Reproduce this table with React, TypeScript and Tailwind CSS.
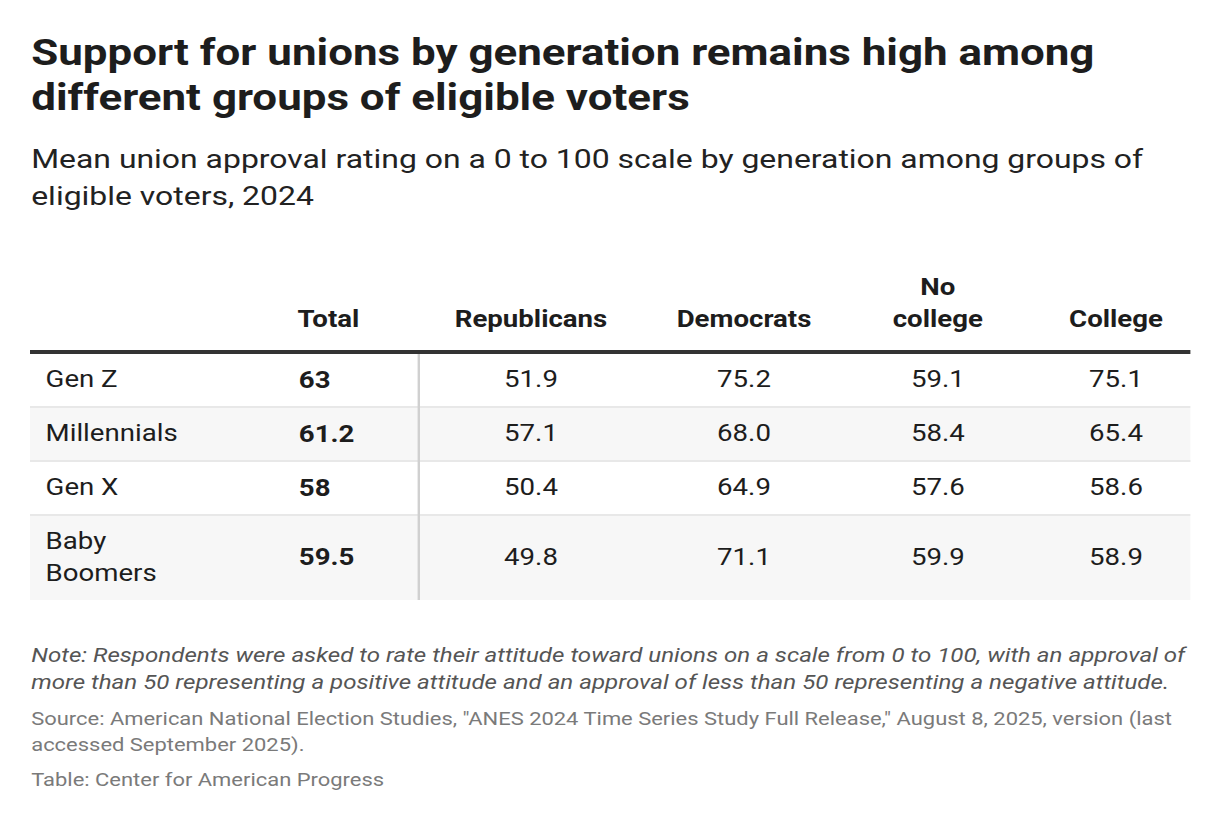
const rows = [
  { label: ['Gen Z'], total: '63', values: ['51.9', '75.2', '59.1', '75.1'] },
  { label: ['Millennials'], total: '61.2', values: ['57.1', '68.0', '58.4', '65.4'] },
  { label: ['Gen X'], total: '58', values: ['50.4', '64.9', '57.6', '58.6'] },
  { label: ['Baby', 'Boomers'], total: '59.5', values: ['49.8', '71.1', '59.9', '58.9'] },
]

const cols = 'grid grid-cols-[213px_112px_185px_170px_153px_134px]'

export default function App() {
  return (
    <div className="w-[1220px] h-[826px] overflow-hidden bg-white">
      <div
        className="w-[1016.67px] origin-top-left scale-x-[1.2] pl-[26px] pr-[16px] pt-[29.5px] text-[#1d1d1d]"
        style={{ fontFamily: 'Roboto, sans-serif' }}
      >
        <h1 className="text-[36.6px] font-bold leading-[45px]">
          Support for unions by generation remains high among different groups of eligible voters
        </h1>
        <p className="mt-[20px] text-[26.6px] leading-[37px] text-[#222]">
          Mean union approval rating on a 0 to 100 scale by generation among groups of eligible voters, 2024
        </p>

        <div className="mt-[58px] -ml-px w-[967px] text-[23px] leading-[32px]">
          <div className={`${cols} items-end border-b-4 border-[#333] font-bold`}>
            <div></div>
            <div className="pl-[10px] pb-[14px]">Total</div>
            <div className="pb-[14px] text-center">Republicans</div>
            <div className="pb-[14px] text-center">Democrats</div>
            <div className="pb-[14px] text-center">
              No
              <br />
              college
            </div>
            <div className="pl-[10px] pb-[14px] text-center">College</div>
          </div>

          {rows.map((r, i) => {
            const last = i === rows.length - 1
            return (
              <div
                key={i}
                className={`${cols} ${i % 2 ? 'bg-[#f7f7f7]' : 'bg-white'} ${last ? '' : 'border-b-2 border-[#e8e8e8]'}`}
              >
                <div className="pl-[13px] py-[10px]">
                  {r.label.map((l, k) => (
                    <div key={k}>{l}</div>
                  ))}
                </div>
                <div
                  className={`flex items-center pl-[11px] font-bold border-r-2 border-[#d0d0d0] ${last ? '' : '-mb-[2px]'}`}
                >
                  {r.total}
                </div>
                {r.values.map((v, j) => (
                  <div key={j} className={`flex items-center justify-center ${j === 3 ? 'pl-[10px]' : ''}`}>
                    {v}
                  </div>
                ))}
              </div>
            )
          })}
        </div>

        <p className="mt-[42px] text-[20.1px] leading-[27px] italic text-[#555]">
          Note: Respondents were asked to rate their attitude toward unions on a scale from 0 to 100, with an approval of more than 50 representing a positive attitude and an approval of less than 50 representing a negative attitude.
        </p>
        <p className="mt-[10px] text-[18.3px] leading-[26px] text-[#7a7a7a]">
          Source: American National Election Studies, "ANES 2024 Time Series Study Full Release," August 8, 2025, version (last accessed September 2025).
        </p>
        <p className="mt-[9px] text-[18.3px] leading-[26px] text-[#7a7a7a]">Table: Center for American Progress</p>
      </div>
    </div>
  )
}
